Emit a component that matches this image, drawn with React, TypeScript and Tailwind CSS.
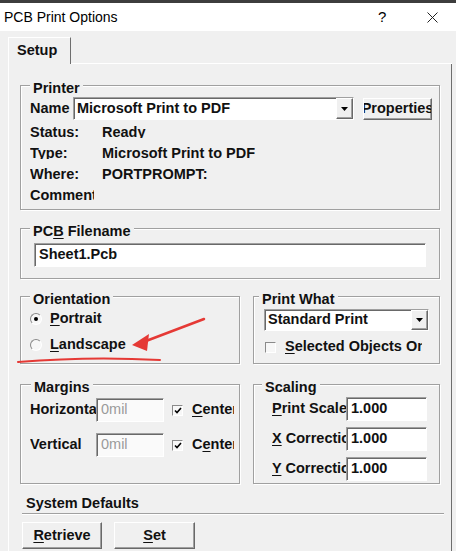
import type { ReactNode } from "react";

const raised =
  "border border-t-white border-l-white border-b-[#696969] border-r-[#696969] shadow-[inset_-1px_-1px_0_#a0a0a0]";
const sunken =
  "border border-t-[#a0a0a0] border-l-[#a0a0a0] border-b-white border-r-white shadow-[inset_1px_1px_0_#696969]";

function Group({
  title,
  legend = "ml-[9px]",
  className = "",
  inner = "",
  children,
}: {
  title: ReactNode;
  legend?: string;
  className?: string;
  inner?: string;
  children: ReactNode;
}) {
  return (
    <fieldset
      className={`min-w-0 border border-[#a0a0a0] shadow-[inset_1px_1px_0_#fff,1px_1px_0_#fff] ${className}`}
    >
      <legend className={`bg-[#f0f0f0] px-[3px] pt-[6px] leading-[10px] ${legend}`}>{title}</legend>
      <div className={inner}>{children}</div>
    </fieldset>
  );
}

function Combo({ value, className = "" }: { value: string; className?: string }) {
  return (
    <div className={`flex items-center bg-white ${sunken} ${className}`}>
      <span className="flex-1 overflow-hidden whitespace-nowrap pl-[3px]">{value}</span>
      <span className={`flex h-full w-[17px] items-center justify-center bg-[#f0f0f0] ${raised}`}>
        <svg width="7" height="4" viewBox="0 0 7 4">
          <path d="M0 0h7L3.5 4z" fill="#000" />
        </svg>
      </span>
    </div>
  );
}

function Field({ value, muted, className = "" }: { value: string; muted?: boolean; className?: string }) {
  return (
    <div
      className={`flex h-[24px] shrink-0 items-center pl-[4px] ${sunken} ${
        muted ? "bg-[#fafafa] font-normal text-[#9a9a9a]" : "bg-white"
      } ${className}`}
    >
      {value}
    </div>
  );
}

function Button({ children, className = "" }: { children: ReactNode; className?: string }) {
  return (
    <div
      className={`flex items-center justify-center overflow-hidden whitespace-nowrap bg-[#f0f0f0] ${raised} ${className}`}
    >
      {children}
    </div>
  );
}

function Radio({ checked }: { checked?: boolean }) {
  return (
    <span className="flex h-[12px] w-[12px] items-center justify-center rounded-full border border-t-[#8a8a8a] border-l-[#8a8a8a] border-b-white border-r-white bg-[#f7f7f7]">
      {checked && <span className="h-[4px] w-[4px] rounded-full bg-black" />}
    </span>
  );
}

function Check({ checked }: { checked?: boolean }) {
  return (
    <span className="flex h-[11px] w-[11px] shrink-0 items-center justify-center border border-t-[#8a8a8a] border-l-[#8a8a8a] border-b-white border-r-white bg-[#f7f7f7]">
      {checked && (
        <svg width="8" height="7" viewBox="0 0 8 7">
          <path d="M1 3.5 L3 5.5 L7 1" stroke="#000" strokeWidth="1.6" fill="none" />
        </svg>
      )}
    </span>
  );
}

function Info({ label, value }: { label: string; value: string }) {
  return (
    <div className="flex h-[21px] items-center">
      <span className="mr-[8px] block h-[14px] w-[64px] overflow-hidden whitespace-nowrap leading-[16px]">
        {label}
      </span>
      <span className="block h-[14px] overflow-hidden leading-[16px]">{value}</span>
    </div>
  );
}

export default function App() {
  return (
    <div className="relative h-[551px] w-[456px] overflow-hidden bg-[#f0f0f0] font-['Liberation_Sans',Arial,sans-serif] text-[14.5px] font-bold text-[#111]">
      {/* Window title */}
      <div className="h-[3px] bg-[#3d3d3d]" />
      <div className="flex h-[28px] items-center bg-white pl-[4px] text-[14px] font-normal text-black">
        <span className="flex-1">PCB Print Options</span>
        <span className="w-[12px] text-[15px]">?</span>
        <span className="ml-[36px] mr-[18px] flex h-[12px] w-[12px] items-center justify-center">
          <svg width="11" height="11" viewBox="0 0 11 11">
            <path d="M0.5 0.5 L10.5 10.5 M10.5 0.5 L0.5 10.5" stroke="#222" strokeWidth="1" />
          </svg>
        </span>
      </div>

      {/* Tabs */}
      <div className="mt-[6px] flex h-[27px]">
        <div className="ml-[8px] flex w-[63px] items-center border-l border-t border-r border-l-white border-t-white border-r-[#6e6e6e] pl-[8px]">
          Setup
        </div>
        <div className="mr-[4px] flex-1 border-b border-white" />
      </div>

      <div className="ml-[8px] flex h-full w-[444px] flex-col border-l border-r border-l-white border-r-[#6e6e6e] px-[11px] pt-[13px]">
        {/* Printer */}
        <Group title="Printer" inner="pb-[5px] pl-[9px] pr-[7px]">
          <div className="mt-[4px] flex h-[23px] items-center">
            <span className="w-[43px]">Name</span>
            <Combo value="Microsoft Print to PDF" className="h-[23px] w-[281px]" />
            <Button className="ml-[9px] h-[22px] w-[69px]">Properties</Button>
          </div>
          <Info label="Status:" value="Ready" />
          <Info label="Type:" value="Microsoft Print to PDF" />
          <Info label="Where:" value="PORTPROMPT:" />
          <Info label="Comment:" value="" />
        </Group>

        {/* PCB filename */}
        <Group
          title={
            <>
              PC<u className="underline-offset-2">B</u> Filename
            </>
          }
          className="mt-[10px]"
          inner="px-[13px] pb-[11px]"
        >
          <Field value="Sheet1.Pcb" className="mt-[7px]" />
        </Group>

        <div className="mt-[9px] flex gap-[13px]">
          <Group title="Orientation" className="w-[220px]" inner="pb-[6px] pl-[9px]">
            <div className="mt-[5px] flex h-[20px] items-center gap-[8px]">
              <Radio checked />
              <span>
                <u className="underline-offset-2">P</u>ortrait
              </span>
            </div>
            <div className="mt-[6px] flex h-[20px] items-center gap-[8px]">
              <Radio />
              <span>
                <u className="underline-offset-2">L</u>andscape
              </span>
            </div>
          </Group>
          <Group title="Print What" legend="ml-[5px]" className="flex-1" inner="pb-[6px] pl-[10px]">
            <Combo value="Standard Print" className="mt-[5px] h-[22px] w-[165px]" />
            <div className="mt-[6px] flex h-[20px] items-center gap-[9px] pl-[1px]">
              <Check />
              <span className="w-[137px] overflow-hidden whitespace-nowrap">
                <u className="underline-offset-2">S</u>elected Objects Only
              </span>
            </div>
          </Group>
        </div>

        <div className="mt-[12px] flex gap-[13px]">
          <Group title="Margins" legend="ml-[10px]" className="w-[220px]" inner="pl-[9px]">
            <div className="mt-[6px] flex h-[24px] items-center">
              <span className="w-[66px] shrink-0 overflow-hidden whitespace-nowrap">Horizontal</span>
              <Field value="0mil" muted className="w-[68px]" />
              <span className="ml-[8px]">
                <Check checked />
              </span>
              <span className="ml-[9px] w-[42px] overflow-hidden whitespace-nowrap">
                <u className="underline-offset-2">C</u>enter
              </span>
            </div>
            <div className="mt-[11px] flex h-[24px] items-center">
              <span className="w-[66px] shrink-0 overflow-hidden whitespace-nowrap">Vertical</span>
              <Field value="0mil" muted className="w-[68px]" />
              <span className="ml-[8px]">
                <Check checked />
              </span>
              <span className="ml-[9px] w-[42px] overflow-hidden whitespace-nowrap">
                C<u className="underline-offset-2">e</u>nter
              </span>
            </div>
          </Group>
          <Group
            title="Scaling"
            legend="ml-[8px]"
            className="flex-1"
            inner="flex flex-col gap-[6px] pb-[2px] pl-[18px]"
          >
            <div className="mt-[5px] flex h-[24px] items-center">
              <span className="w-[74px] shrink-0 overflow-hidden whitespace-nowrap">
                <u className="underline-offset-2">P</u>rint Scale
              </span>
              <Field value="1.000" className="w-[81px]" />
            </div>
            <div className="flex h-[24px] items-center">
              <span className="w-[74px] shrink-0 overflow-hidden whitespace-nowrap">
                <u className="underline-offset-2">X</u> Correction
              </span>
              <Field value="1.000" className="w-[81px]" />
            </div>
            <div className="flex h-[24px] items-center">
              <span className="w-[74px] shrink-0 overflow-hidden whitespace-nowrap">
                <u className="underline-offset-2">Y</u> Correction
              </span>
              <Field value="1.000" className="w-[81px]" />
            </div>
          </Group>
        </div>

        {/* System defaults */}
        <div className="mt-[11px] pl-[6px] leading-[16px]">System Defaults</div>
        <div className="ml-[2px] -mr-[4px] mt-[2px] border-t border-[#a0a0a0] shadow-[0_1px_0_#fff]" />
        <div className="ml-[2px] mt-[8px] flex gap-[12px]">
          <Button className="h-[27px] w-[80px]">
            <span>
              <u className="underline-offset-2">R</u>etrieve
            </span>
          </Button>
          <Button className="h-[27px] w-[81px]">
            <span>
              <u className="underline-offset-2">S</u>et
            </span>
          </Button>
        </div>
      </div>

      {/* red annotation on top */}
      <svg className="pointer-events-none absolute inset-0" width="456" height="551" viewBox="0 0 456 551">
        <path d="M204 319 L146 341" stroke="#e53935" strokeWidth="2.5" strokeLinecap="round" />
        <path d="M132 345 L149 334 L147 351 Z" fill="#e53935" />
        <path d="M18 362 Q 90 356 160 360" stroke="#e53935" strokeWidth="2" fill="none" strokeLinecap="round" />
      </svg>
    </div>
  );
}
